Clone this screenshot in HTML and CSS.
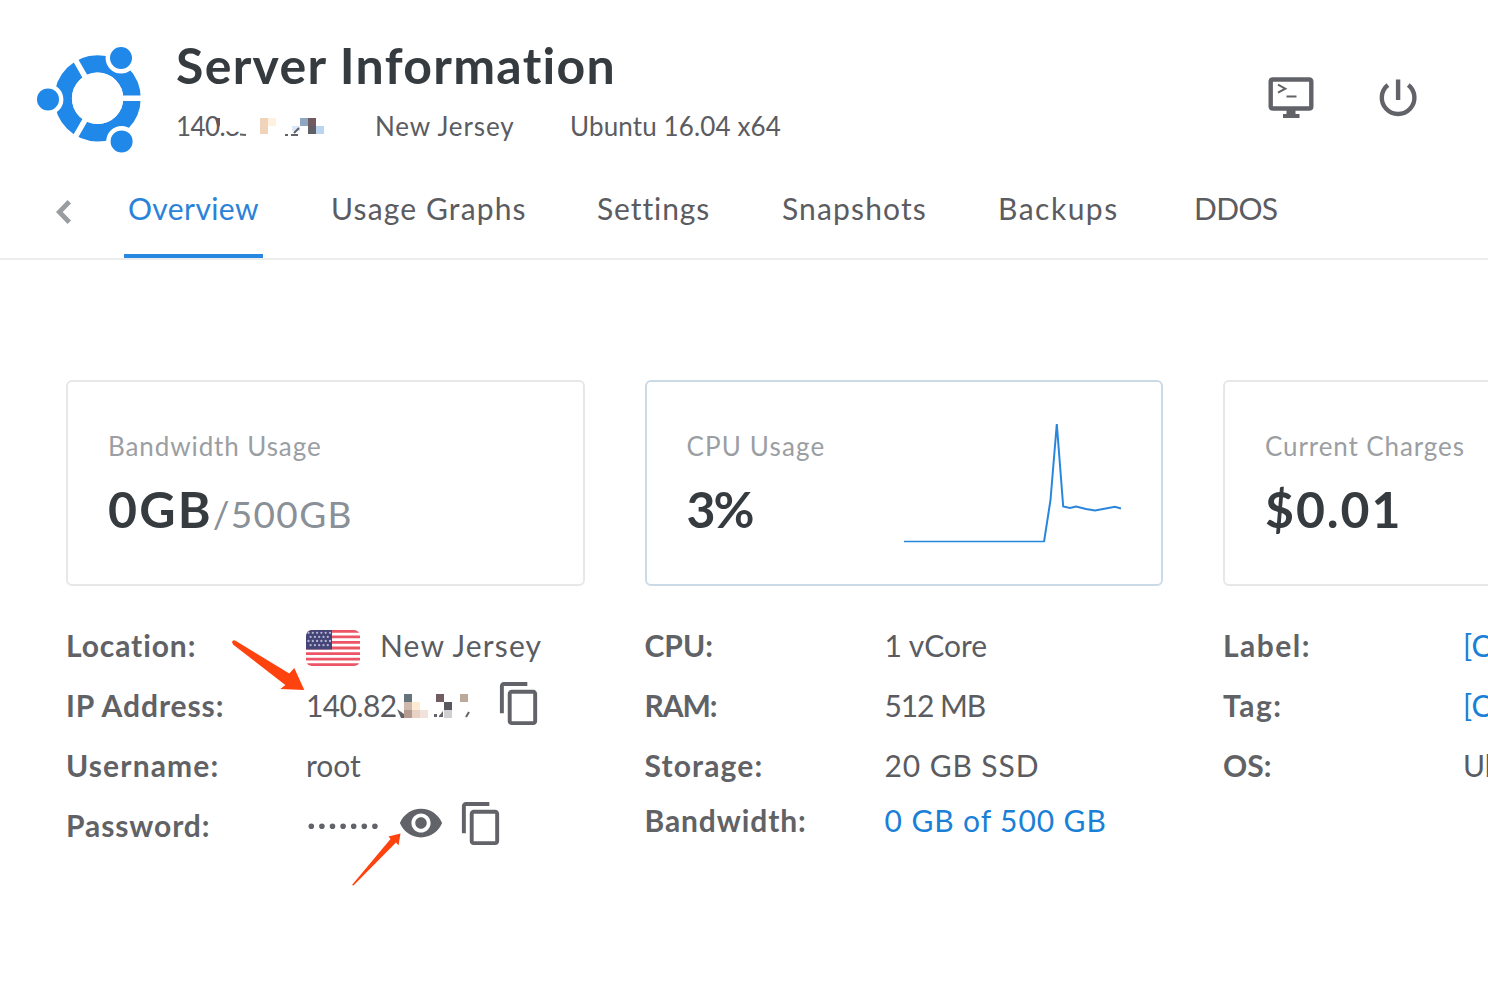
FILE: index.html
```html
<!DOCTYPE html>
<html lang="en">
<head>
<meta charset="utf-8">
<title>Server Information</title>
<link rel="stylesheet" href="styles.css">
</head>
<body>
<header class="header">
  <svg class="logo" viewBox="36 46 106 108">
    <circle class="logo-ring" cx="97.6" cy="98.3" r="34.4"/>
    <path class="logo-gap" d="M97.6 98.3H145M97.6 98.3L73.1 55.9M97.6 98.3L73.1 140.7"/>
    <circle class="logo-hole" cx="97.6" cy="98.3" r="25.7"/>
    <g class="logo-dot"><circle cx="48" cy="99.4" r="13.2"/><circle cx="121" cy="58" r="13.2"/><circle cx="121.6" cy="141.4" r="13.2"/></g>
  </svg>
  <div class="heading">
    <h1 class="title">Server Information</h1>
    <div class="subtitle">
      <div class="masked"><span class="tight">140.8</span>
        <svg class="mask" viewBox="210 112 120 32">
          <path fill="#fff" d="M219 114H330V131L248 130Q234 134 222 130Z"/>
          <path fill="#6d5557" d="M215 118h5v7l-2 4z"/>
          <path fill="#efd3bb" d="M260 118h8v16h-8z"/><path fill="#fff1df" d="M268 118h8v8h-8z"/>
          <path fill="#8fa6c2" d="M300 118h8v8h-8z"/><path fill="#705b61" d="M308 118h8v8h-8z"/><path fill="#5e6066" d="M308 126h8v8h-8z"/><path fill="#bdd4f0" d="M316 126h8v8h-8z"/><path fill="#dbe8fa" d="M292 126h8v5h-8z"/>
          <path class="scrap" d="M240 134.500l6 .5M285 135h3M291 135h7M299 128l-5 5"/>
        </svg>
      </div>
      <span class="s9">New Jersey</span><span class="s1">Ubuntu 16.04 x64</span>
    </div>
  </div>
  <div class="actions">
    <svg class="console" viewBox="1266 75 50 46"><path fill="none" stroke="#626369" stroke-width="4.4" d="M1273 79.5h36q2.300 0 2.300 2.300v24.400q0 2.300-2.300 2.300h-36q-2.300 0-2.300-2.300v-24.400q0-2.300 2.300-2.300z"/><path fill="#626369" d="M1286.500 110h9v4h4v4h-16.500v-4h3.500z"/><path fill="none" stroke="#626369" stroke-width="2" d="M1278 84.700l7.300 4-7.300 4M1286.500 96.500h10"/></svg>
    <svg class="power" viewBox="1378 75 40 46"><path fill="none" stroke="#626369" stroke-width="4.400" d="M1387.900 85A16.300 16.300 0 1 0 1408.300 85M1398.100 79.500V100"/></svg>
  </div>
</header>
<nav class="tabs">
  <svg class="back" viewBox="8 6 7.410 12"><path fill="none" stroke="#999ca0" stroke-width="2.400" d="M14.600 6.900L9.600 12l5 5.100"/></svg>
  <a class="tab active s4">Overview</a><a class="tab s12">Usage Graphs</a><a class="tab s9">Settings</a><a class="tab s12">Snapshots</a><a class="tab s16">Backups</a><a class="tab tight">DDOS</a>
</nav>
<main class="main">
  <section class="column">
    <div class="card"><div class="card-label s9">Bandwidth Usage</div><div class="card-value"><span class="quota">0GB</span><small class="limit">/500GB</small></div></div>
    <dl class="facts">
      <dt class="s9">Location:</dt><dd>
        <svg class="flag" viewBox="0 0 54 36"><defs><clipPath id="flag-shape"><rect width="54" height="36" rx="6"/></clipPath></defs><g clip-path="url(#flag-shape)"><path fill="#fff" d="M0 0h54v36H0z"/><path stroke="#ec5565" stroke-width="2.770" d="M0 1.385h54M0 6.925h54M0 12.465h54M0 18h54M0 23.540h54M0 29.080h54M0 34.620h54"/><path fill="#444477" d="M0 0h26v19.400H0z"/><path stroke="#b5b5d3" stroke-width="2.300" stroke-linecap="round" stroke-dasharray="0 4.300" d="M2.500 2.800H24.500M4.600 6.900H22.500M2.500 11H24.500M4.600 15.200H22.500"/></g></svg>
        <span class="s12">New Jersey</span></dd>
      <dt class="s9">IP Address:</dt><dd class="masked"><span class="ip tight">140.82</span>
        <svg class="mask-ip" viewBox="392 690 84 34"><path fill="#fff" d="M397 692H476V722H401Q401 714 397 709Z"/><path fill="#67737b" d="M404 694h8v8h-8z"/><path fill="#cfb8ad" d="M404 702h8v8h-8z"/><path fill="#ffebd4" d="M412 702h8v8h-8z"/><path fill="#b49a8f" d="M404 710h8v8h-8z"/><path fill="#e7d3c6" d="M412 710h8v8h-8z"/><path fill="#f1e2dc" d="M420 710h8v8h-8z"/><path fill="#725d63" d="M436 694h8v8h-8z"/><path fill="#58595f" d="M444 702h8v8h-8z"/><path fill="#d0d0d3" d="M444 710h8v8h-8z"/><path fill="#bba99b" d="M460 694h8v8h-8z"/><path fill="#626369" d="M397 709l7 5v4h-3zM434 714h3v3h-3zM439 716l4-5v6h-4z"/><path class="scrap" d="M469 712l-3 5"/></svg>
        <svg class="copy" viewBox="0 0 24 24"><path d="M16 1H4c-1.100 0-2 .9-2 2v14h2V3h12V1zm3 4H8c-1.100 0-2 .9-2 2v14c0 1.100.9 2 2 2h11c1.100 0 2-.9 2-2V7c0-1.100-.9-2-2-2zm0 16H8V7h11v14z"/></svg></dd>
      <dt class="s12">Username:</dt><dd>root</dd>
      <dt class="s9">Password:</dt><dd><svg class="dots" viewBox="306 797 92 60"><path d="M311.300 828.300H376"/></svg>
        <svg class="eye" viewBox="0 0 24 24"><path d="M12 4.500C7 4.500 2.730 7.610 1 12c1.730 4.390 6 7.500 11 7.500s9.270-3.110 11-7.500c-1.730-4.390-6-7.500-11-7.500zM12 17c-2.760 0-5-2.240-5-5s2.240-5 5-5 5 2.240 5 5-2.240 5-5 5zm0-8c-1.660 0-3 1.340-3 3s1.340 3 3 3 3-1.340 3-3-1.340-3-3-3z"/></svg>
        <svg class="copy" viewBox="0 0 24 24"><path d="M16 1H4c-1.100 0-2 .9-2 2v14h2V3h12V1zm3 4H8c-1.100 0-2 .9-2 2v14c0 1.100.9 2 2 2h11c1.100 0 2-.9 2-2V7c0-1.100-.9-2-2-2zm0 16H8V7h11v14z"/></svg></dd>
    </dl>
  </section>
  <section class="column">
    <div class="card hover"><div><div class="card-label s12">CPU Usage</div><div class="card-value percent">3%</div></div>
      <svg class="spark" viewBox="904 420 218 124"><path fill="none" stroke="#2a86dc" stroke-width="1.400" d="M904 541.500h140"/><path fill="none" stroke="#2a86dc" stroke-width="2" d="M1044 542L1050.500 500L1056.800 424L1063.200 506.500L1070 508L1076 506.500L1086 509L1095 510.500L1115 506.800L1121 508.500"/></svg></div>
    <dl class="facts">
      <dt>CPU:</dt><dd>1 vCore</dd>
      <dt class="tighter">RAM:</dt><dd class="tighter">512 MB</dd>
      <dt class="s12">Storage:</dt><dd class="s9">20 GB SSD</dd>
      <dt class="raised s9">Bandwidth:</dt><dd class="raised link s9">0 GB of 500 GB</dd>
    </dl>
  </section>
  <section class="column">
    <div class="card"><div class="card-label s9">Current Charges</div><div class="card-value charge">$0.01</div></div>
    <dl class="facts">
      <dt class="s16">Label:</dt><dd class="link">[C</dd>
      <dt class="s16">Tag:</dt><dd class="link">[C</dd>
      <dt>OS:</dt><dd>Ub</dd>
    </dl>
  </section>
</main>
<svg class="arrows" viewBox="0 0 1488 990"><path d="M232 642q1-3 4-1L289.300 673.500L294.300 668L304.300 690L280.300 689L285.300 685L233 644.500z"/><path d="M352 885L390.500 839L388.500 836.500L400.500 833.500L398.500 845.500L396 842.500L353.500 885.500z"/></svg>
</body>
</html>
```
FILE: styles.css
```css
* { box-sizing: border-box; }
body { margin: 0; width: 1488px; height: 990px; overflow: hidden; background: #fff; color: #5b5c61; font: 30px/60px Lato, "Open Sans", sans-serif; font-variant-ligatures: none; position: relative; }
svg { display: block; flex: none; }
.header { display: flex; height: 174px; padding: 34px 70px 0 36px; }
.logo { width: 106px; height: 108px; margin-top: 12px; }
.logo-ring { fill: none; stroke: #2088e8; stroke-width: 17.400px; }
.logo-gap { fill: none; stroke: #fff; stroke-width: 5.500px; }
.logo-hole { fill: #fff; }
.logo-dot { fill: #2088e8; stroke: #fff; stroke-width: 4.400px; }
.heading { flex: 1; margin-left: 34px; white-space: nowrap; }
.title { margin: 0; padding-top: 1px; font-size: 50px; line-height: 60px; font-weight: 700; letter-spacing: 1.300px; color: #363b40; }
.subtitle { display: grid; grid-template-columns: 199px 195px auto; margin-top: 13px; font-size: 26px; line-height: 36px; }

/* Tracking steps */
.tighter { letter-spacing: -1.100px; }
.tight { letter-spacing: -0.600px; }
.s1 { letter-spacing: 0.120px; }
.s4 { letter-spacing: 0.400px; }
.s9 { letter-spacing: 0.900px; }
.s12 { letter-spacing: 1.150px; }
.s16 { letter-spacing: 1.500px; }

.masked { position: relative; }
.mask { position: absolute; left: 34px; top: 4px; width: 120px; height: 32px; }
.mask-ip { position: absolute; left: 86px; top: 15px; width: 84px; height: 34px; }
.scrap { fill: none; stroke: #626369; stroke-width: 2px; }
.actions { display: flex; gap: 62px; margin-top: 41px; }
.console { width: 50px; height: 46px; }
.power { width: 40px; height: 46px; }
.tabs { display: grid; grid-template-columns: 68px 203px 266px 185px 216px 196px auto; height: 86px; padding-left: 56px; border-bottom: 2px solid #ececec; white-space: nowrap; }
.back { width: 15px; height: 24px; margin-top: 26px; }
.tab { height: 84px; padding: 4px 0 0 4px; justify-self: start; }
.active { width: 139px; color: #2b82d9; border-bottom: 4px solid #2888e1; }
.main { display: grid; grid-template-columns: repeat(3, 518.500px); column-gap: 60px; padding: 120px 0 0 66px; white-space: nowrap; }
.card { display: flex; flex-direction: column; height: 206px; padding: 44px 40px 0; border: 2px solid #e6e7e9; border-radius: 6px; }
.hover { flex-direction: row; justify-content: space-between; padding: 44px 39px 0 40px; border-color: #cbdae7; }
.card-label { font-size: 26px; line-height: 40px; color: #9b9ea2; }
.card-value { margin-top: 13px; font-size: 50px; line-height: 60px; font-weight: 700; color: #363b40; }
.card-value small { font-size: 37px; font-weight: 400; color: #899097; }
.quota { letter-spacing: 2.200px; }
.limit { letter-spacing: 1.300px; }
.percent { letter-spacing: -2px; }
.charge { letter-spacing: 1.900px; }
.spark { width: 218px; height: 124px; margin-top: -6px; }
.facts { display: grid; grid-template-columns: 240px 1fr; grid-auto-rows: 60px; margin: 29px 0 0; }
dt { font-weight: 700; color: #616266; }
dd { display: flex; margin: 0; }
.raised { margin-top: -5px; }
.link { color: #1a7fd6; }
.flag { width: 54px; height: 36px; margin: 15px 20px 0 0; }
.copy, .eye { fill: #626369; width: 47px; height: 47px; margin-top: 5px; }
.ip { width: 190px; }
.eye { width: 46px; height: 46px; }
.dots { width: 92px; height: 60px; fill: none; stroke: #626369; stroke-width: 5.600px; stroke-linecap: round; stroke-dasharray: 0 10.600; }
.eye + .copy { margin-left: 14px; }
.arrows { position: absolute; left: 0; top: 0; width: 1488px; height: 990px; fill: #ff430f; pointer-events: none; }
```
